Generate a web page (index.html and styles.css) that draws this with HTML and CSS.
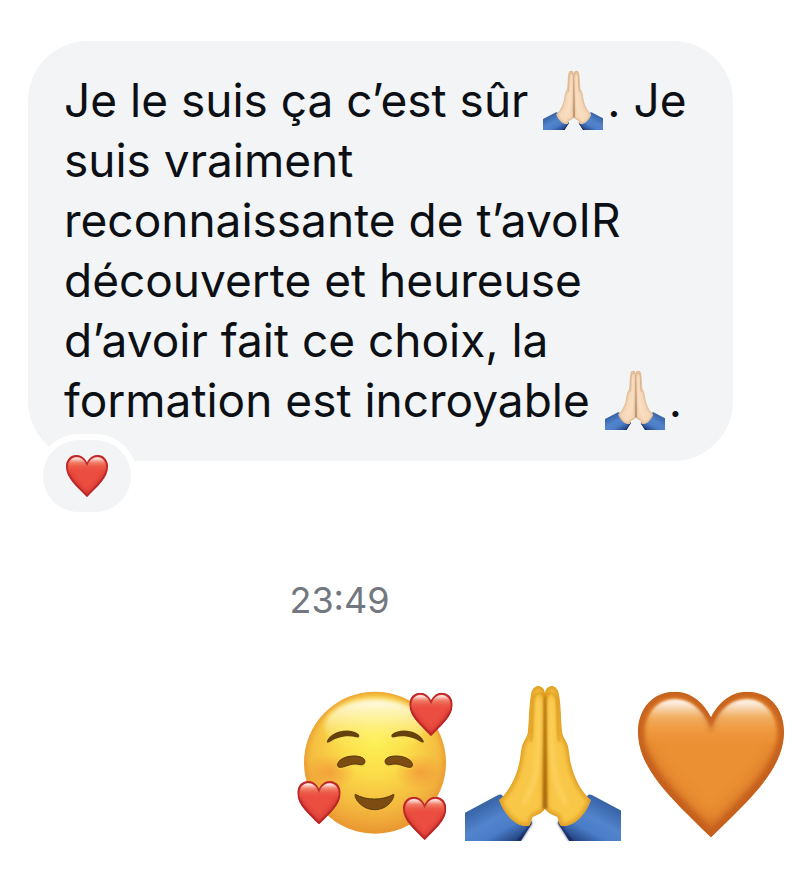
FILE: index.html
```
<!DOCTYPE html>
<html lang="fr">
<head>
    <meta charset="UTF-8">
    <meta name="viewport" content="width=device-width, initial-scale=1.0">
    <title>Messages</title>
    <link rel="stylesheet" href="styles.css">
</head>
<body>

    <!-- shared emoji shapes -->
    <svg class="defs" width="0" height="0" aria-hidden="true">
        <defs>
            <filter id="soft" x="-20%" y="-20%" width="140%" height="140%"><feGaussianBlur stdDeviation="7"/></filter>
            <filter id="softer" x="-40%" y="-40%" width="180%" height="180%"><feGaussianBlur stdDeviation="22"/></filter>
            <filter id="fine" x="-50%" y="-20%" width="200%" height="140%"><feGaussianBlur stdDeviation="3"/></filter>

            <path id="heart-shape" d="M258 142C235 95 196 65 149 65C85 65 39 115 39 185C39 300 150 395 258 502C366 395 477 300 477 185C477 115 431 65 367 65C320 65 281 95 258 142Z"/>
            <clipPath id="heart-clip"><use href="#heart-shape"/></clipPath>
            <linearGradient id="shine" gradientUnits="userSpaceOnUse" x1="0" y1="88" x2="0" y2="225">
                <stop offset="0" stop-color="#fff" stop-opacity=".95"/>
                <stop offset=".15" stop-color="#fff" stop-opacity=".7"/>
                <stop offset=".4" stop-color="#fff3c8" stop-opacity=".3"/>
                <stop offset=".7" stop-color="#ffe8a0" stop-opacity=".08"/>
                <stop offset="1" stop-color="#ffe8a0" stop-opacity="0"/>
            </linearGradient>
            <symbol id="heart" viewBox="39 65 438 437">
                <g clip-path="url(#heart-clip)">
                    <use href="#heart-shape" fill="var(--heart)"/>
                    <path d="M39 250C90 350 170 420 258 502C346 420 426 350 477 250" fill="none" stroke="var(--heart-edge)" stroke-width="56" opacity=".75" filter="url(#softer)"/>
                    <use href="#heart-shape" fill="none" stroke="var(--heart-edge)" stroke-width="38" opacity=".9" filter="url(#soft)"/>
                    <path d="M258 172C232 118 196 88 150 88C98 88 62 130 62 190L64 225H452L454 190C454 130 418 88 366 88C320 88 284 118 258 172Z" fill="url(#shine)" filter="url(#fine)"/>
                </g>
            </symbol>

            <path id="hand-shape" d="M270 416C262 430 245 436 234 440C228 448 230 460 222 468C188 474 150 440 132 390C162 366 184 320 192 282C198 256 197 234 205 218C210 206 216 202 218 190C223 150 221 106 229 68C233 54 242 48 250 48C262 49 269 58 270 70Z"/>
            <clipPath id="hand-clip"><use href="#hand-shape"/></clipPath>
            <linearGradient id="sleeve" gradientUnits="userSpaceOnUse" x1="100" y1="385" x2="178" y2="525">
                <stop offset="0" stop-color="#3560a3"/>
                <stop offset=".4" stop-color="#5284cd"/>
                <stop offset=".65" stop-color="#4a7cc8"/>
                <stop offset="1" stop-color="#1c3872"/>
            </linearGradient>
            <g id="arm">
                <path d="M30 428L128 376C134 373 139 372 143 378L228 452C234 458 228 466 222 474L197 513H30Z" fill="url(#sleeve)"/>
                <path d="M186 513C202 496 218 478 228 452C234 458 228 466 222 474L197 513Z" fill="#0c1f50" filter="url(#fine)"/>
                <g clip-path="url(#hand-clip)">
                    <use href="#hand-shape" fill="var(--skin)"/>
                    <use href="#hand-shape" fill="none" stroke="var(--skin-edge)" stroke-width="16" opacity=".85" filter="url(#soft)"/>
                    <path d="M228 215C236 160 228 88 240 76C250 66 266 68 270 82" fill="none" stroke="var(--skin-edge)" stroke-width="5" filter="url(#fine)"/>
                    <path d="M253 95C253 180 254 250 240 320C234 350 222 372 208 398" fill="none" stroke="var(--skin-light)" stroke-width="14" stroke-linecap="round" opacity=".7" filter="url(#soft)"/>
                    <path d="M268 84L264 416H272V76Z" fill="var(--skin-line)" filter="url(#fine)"/>
                </g>
            </g>
            <symbol id="pray" viewBox="30 45 468 468">
                <use href="#arm"/>
                <use href="#arm" transform="translate(540 0) scale(-1 1)"/>
            </symbol>

            <radialGradient id="face-fill" gradientUnits="userSpaceOnUse" cx="285" cy="215" r="285">
                <stop offset="0" stop-color="#fdf055"/>
                <stop offset=".35" stop-color="#fbdc49"/>
                <stop offset=".7" stop-color="#f4ba3f"/>
                <stop offset="1" stop-color="#e99332"/>
            </radialGradient>
            <linearGradient id="face-shine" x1="0" y1="0" x2="0" y2="1">
                <stop offset="0" stop-color="#fff" stop-opacity=".9"/>
                <stop offset=".4" stop-color="#fffbc0" stop-opacity=".6"/>
                <stop offset="1" stop-color="#fff152" stop-opacity="0"/>
            </linearGradient>
            <radialGradient id="blush">
                <stop offset="0" stop-color="#f28a35" stop-opacity=".6"/>
                <stop offset="1" stop-color="#f28a35" stop-opacity="0"/>
            </radialGradient>
            <clipPath id="face-clip"><circle cx="285" cy="278" r="213"/></clipPath>
        </defs>
    </svg>

    <main class="chat">
        <div class="message">
            <p class="bubble">Je le suis ça c’est sûr <svg class="emoji emoji-light" role="img" aria-label="mains jointes"><use href="#pray"/></svg>. Je suis vraiment reconnaissante de t’avoIR découverte et heureuse d’avoir fait ce choix, la formation est incroyable <svg class="emoji emoji-light" role="img" aria-label="mains jointes"><use href="#pray"/></svg>.</p>
            <button class="reaction" type="button" aria-label="Réaction cœur">
                <svg class="reaction-heart"><use href="#heart"/></svg>
            </button>
        </div>

        <time class="time" datetime="23:49">23:49</time>

        <div class="big-emojis">
            <svg class="big" viewBox="51 45 468 468" role="img" aria-label="visage souriant avec des cœurs">
                <g clip-path="url(#face-clip)">
                    <circle cx="285" cy="278" r="213" fill="url(#face-fill)"/>
                    <circle cx="285" cy="278" r="213" fill="none" stroke="#e9982f" stroke-width="16" opacity=".8" filter="url(#soft)"/>
                    <ellipse cx="285" cy="168" rx="150" ry="80" fill="url(#face-shine)" filter="url(#soft)"/>
                    <ellipse cx="150" cy="306" rx="76" ry="54" fill="url(#blush)"/>
                    <ellipse cx="420" cy="306" rx="76" ry="54" fill="url(#blush)"/>
                </g>
                <g fill="#f6d64a" opacity=".6" transform="translate(0 6)">
                    <path d="M174 280C184 254 250 250 255 272C257 286 250 286 240 284C216 278 204 290 184 292C174 292 171 288 174 280Z"/>
                    <path d="M396 280C386 254 320 250 315 272C313 286 320 286 330 284C354 278 366 290 386 292C396 292 399 288 396 280Z"/>
                </g>
                <g fill="#65410b">
                    <path d="M141 213C155 181 211 172 236 193C241 200 236 204 229 202C202 193 168 202 149 216C143 219 139 218 141 213Z"/>
                    <path d="M431 213C417 181 361 172 336 193C331 200 336 204 343 202C370 193 404 202 423 216C429 219 433 218 431 213Z"/>
                </g>
                <g fill="#7c4c12" stroke="#593707" stroke-width="3">
                    <path d="M173 281C182 254 246 251 254 270C257 280 250 286 240 284C216 278 204 288 184 292C174 293 171 288 173 281Z"/>
                    <path d="M397 281C388 254 324 251 316 270C313 280 320 286 330 284C354 278 366 288 386 292C396 293 399 288 397 281Z"/>
                    <path d="M226 373C258 392 309 392 341 373C345 378 329 419 283 419C240 418 221 379 226 373Z"/>
                </g>
                <g class="red">
                    <use href="#heart" x="388" y="68" width="130" height="130"/>
                    <use href="#heart" x="52" y="333" width="130" height="130"/>
                    <use href="#heart" x="369" y="380" width="130" height="130"/>
                </g>
            </svg>
            <svg class="big" role="img" aria-label="mains jointes"><use href="#pray"/></svg>
            <svg class="big orange" viewBox="24 45 468 468" role="img" aria-label="cœur orange">
                <use href="#heart" x="39" y="65" width="438" height="437"/>
            </svg>
        </div>
    </main>

</body>
</html>
```
FILE: styles.css
```
body {
    font-family: Inter, sans-serif;
    margin: 0;
    padding: 0;
    background-color: #fff;
    color: #0c1014;

    --skin: #f9c748;
    --skin-light: #ffd768;
    --skin-edge: #d9941e;
    --skin-line: #9a5c08;
    --heart: #eb4d40;
    --heart-edge: #b92527;
}

.defs {
    position: absolute;
}

.chat {
    display: flex;
    flex-direction: column;
    padding: 41px 8px 40px 28px;
}

.message {
    margin-right: 56px;
}

.bubble {
    margin: 0;
    padding: 29px 44px 31px 36px;
    border-radius: 60px;
    background: #f2f4f6;
    font-size: 46px;
    line-height: 60px;
}

.emoji {
    width: 60px;
    height: 60px;
    margin: -4px 4px -4px 2px;
    vertical-align: -9px;
}
.emoji-light {
    --skin: #f7dabb;
    --skin-light: #fde6cb;
    --skin-edge: #d3a67e;
    --skin-line: #9a6a44;
}

.reaction {
    display: flex;
    align-items: center;
    justify-content: center;
    position: relative;
    box-sizing: border-box;
    width: 100px;
    height: 84px;
    margin: -27px 0 0 9px;
    padding: 0;
    border: 6px solid #fff;
    border-radius: 42px;
    background: #f2f4f6;
    cursor: pointer;
}
.reaction-heart {
    width: 42px;
    height: 42px;
}

.time {
    margin: 60px 138px 0 0;
    text-align: center;
    color: #737780;
    font-size: 36px;
    line-height: 44px;
}

.big-emojis {
    display: flex;
    justify-content: flex-end;
    gap: 12px;
    margin-top: 63px;
}
.big {
    width: 156px;
    height: 156px;
}

.red {
    --heart: #eb4d40;
    --heart-edge: #b92527;
}
.orange {
    --heart: #ec9034;
    --heart-edge: #c45f1f;
}
```
